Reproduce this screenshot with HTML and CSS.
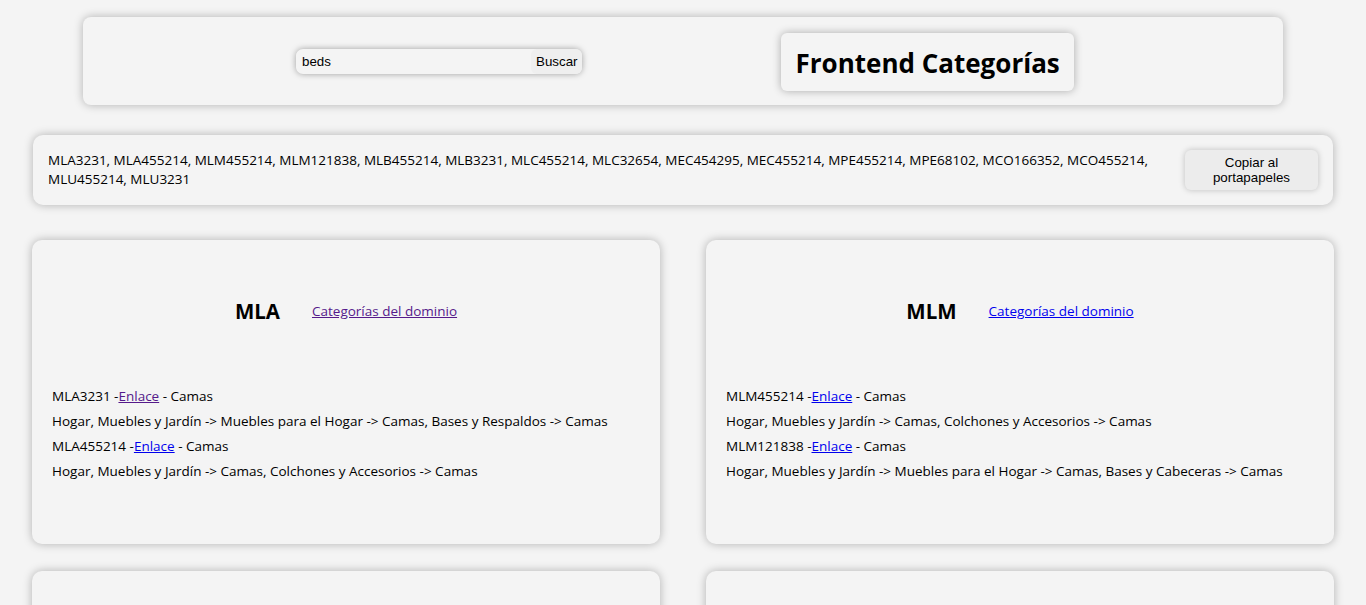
FILE: index.html
```html
<!DOCTYPE html>
<html lang="es">
<head>
<meta charset="utf-8">
<title>Frontend Categorías</title>
<link rel="stylesheet" href="styles.css">
</head>
<body>
<header class="top">
  <form class="search">
    <input class="search-input" type="text" value="beds">
    <button class="search-btn" type="button">Buscar</button>
  </form>
  <div class="title-box"><h1>Frontend Categorías</h1></div>
</header>

<section class="ids">
  <p class="ids-text">MLA3231, MLA455214, MLM455214, MLM121838, MLB455214, MLB3231, MLC455214, MLC32654, MEC454295, MEC455214, MPE455214, MPE68102, MCO166352, MCO455214, MLU455214, MLU3231</p>
  <button class="copy-btn" type="button">Copiar al<br>portapapeles</button>
</section>

<main class="grid">
  <article class="card">
    <div class="card-head"><h2>MLA</h2><a class="visited" href="#">Categorías del dominio</a></div>
    <ul class="cat-list">
      <li>MLA3231 -<a class="visited" href="#">Enlace</a> - Camas</li>
      <li>Hogar, Muebles y Jardín -&gt; Muebles para el Hogar -&gt; Camas, Bases y Respaldos -&gt; Camas</li>
      <li>MLA455214 -<a href="#">Enlace</a> - Camas</li>
      <li>Hogar, Muebles y Jardín -&gt; Camas, Colchones y Accesorios -&gt; Camas</li>
    </ul>
  </article>
  <article class="card">
    <div class="card-head"><h2>MLM</h2><a href="#">Categorías del dominio</a></div>
    <ul class="cat-list">
      <li>MLM455214 -<a href="#">Enlace</a> - Camas</li>
      <li>Hogar, Muebles y Jardín -&gt; Camas, Colchones y Accesorios -&gt; Camas</li>
      <li>MLM121838 -<a href="#">Enlace</a> - Camas</li>
      <li>Hogar, Muebles y Jardín -&gt; Muebles para el Hogar -&gt; Camas, Bases y Cabeceras -&gt; Camas</li>
    </ul>
  </article>
  <article class="card">
    <div class="card-head"><h2>MLB</h2><a href="#">Categorías del dominio</a></div>
    <ul class="cat-list">
      <li>MLB455214 -<a href="#">Enlace</a> - Camas</li>
      <li>Casa, Móveis e Decoração -&gt; Camas, Colchões e Acessórios -&gt; Camas</li>
      <li>MLB3231 -<a href="#">Enlace</a> - Camas</li>
      <li>Casa, Móveis e Decoração -&gt; Móveis para Casa -&gt; Camas -&gt; Camas</li>
    </ul>
  </article>
  <article class="card">
    <div class="card-head"><h2>MLC</h2><a href="#">Categorías del dominio</a></div>
    <ul class="cat-list">
      <li>MLC455214 -<a href="#">Enlace</a> - Camas</li>
      <li>Hogar, Muebles y Jardín -&gt; Camas, Colchones y Accesorios -&gt; Camas</li>
      <li>MLC32654 -<a href="#">Enlace</a> - Camas</li>
      <li>Hogar, Muebles y Jardín -&gt; Muebles para el Hogar -&gt; Camas -&gt; Camas</li>
    </ul>
  </article>
</main>
</body>
</html>
```

FILE: styles.css
```css
html, body {
  margin: 0;
  padding: 0;
}

body {
  background: #f4f4f4;
  font-family: "Segoe UI", "Open Sans", "Noto Sans", sans-serif;
  font-size: 13.5px;
  color: #000;
  padding-top: 17px;
}

.top {
  width: 1200px;
  height: 88px;
  margin: 0 auto;
  box-sizing: border-box;
  padding-left: 213px;
  background: #f4f4f4;
  border-radius: 8px;
  box-shadow: 0 0 10px rgba(0, 0, 0, 0.28);
  display: flex;
  align-items: center;
  gap: 199px;
}

.search {
  display: flex;
  align-items: center;
  margin: 0;
  border-radius: 7px;
  box-shadow: 0 0 6px rgba(0, 0, 0, 0.35);
}

.search-input {
  width: 235px;
  height: 22px;
  box-sizing: border-box;
  border: none;
  border-radius: 6px 0 0 6px;
  background: #f4f4f4;
  padding: 0 6px;
  font-family: "Liberation Sans", Arial, sans-serif;
  font-size: 13.33px;
  color: #000;
  outline: none;
}

.search-btn {
  height: 25px;
  border: none;
  border-radius: 6px;
  background: #efefef;
  padding: 0 5px;
  font-family: "Liberation Sans", Arial, sans-serif;
  font-size: 13.33px;
  color: #000;
}

.title-box {
  background: #f4f4f4;
  border-radius: 6px;
  box-shadow: 0 0 8px rgba(0, 0, 0, 0.3);
  padding: 0 14px;
  height: 58px;
  margin-top: 2px;
  display: flex;
  align-items: center;
}

.title-box h1 {
  margin: 2px 0 0;
  font-size: 26px;
  font-weight: 700;
}

.ids {
  width: 1300px;
  margin: 30px auto 0;
  box-sizing: border-box;
  padding: 15px 15px;
  background: #f4f4f4;
  border-radius: 10px;
  box-shadow: 0 0 10px rgba(0, 0, 0, 0.28);
  display: flex;
  align-items: center;
  gap: 12px;
}

.ids-text {
  margin: 0;
  flex: 1;
  line-height: 19px;
}

.copy-btn {
  flex: none;
  width: 133px;
  height: 40px;
  border: none;
  border-radius: 6px;
  background: #ececec;
  box-shadow: 0 0 6px rgba(0, 0, 0, 0.22);
  font-family: "Liberation Sans", Arial, sans-serif;
  font-size: 13.33px;
  line-height: 15px;
  color: #000;
}

.grid {
  width: 1302px;
  margin: 35px auto 0;
  display: grid;
  grid-template-columns: 628px 628px;
  column-gap: 46px;
  row-gap: 27px;
  padding-bottom: 30px;
}

.card {
  height: 304px;
  box-sizing: border-box;
  padding: 51px 20px 0;
  background: #f4f4f4;
  border-radius: 10px;
  box-shadow: 0 0 10px rgba(0, 0, 0, 0.28);
}

.card-head {
  height: 40px;
  display: flex;
  align-items: center;
  justify-content: center;
  gap: 32px;
}

.card-head h2 {
  margin: 0;
  font-size: 20.5px;
  font-weight: 700;
}

a {
  color: #0000ee;
}

a.visited {
  color: #551a8b;
}

.cat-list {
  list-style: none;
  margin: 53px 0 0;
  padding: 0;
  line-height: 25px;
}
```
